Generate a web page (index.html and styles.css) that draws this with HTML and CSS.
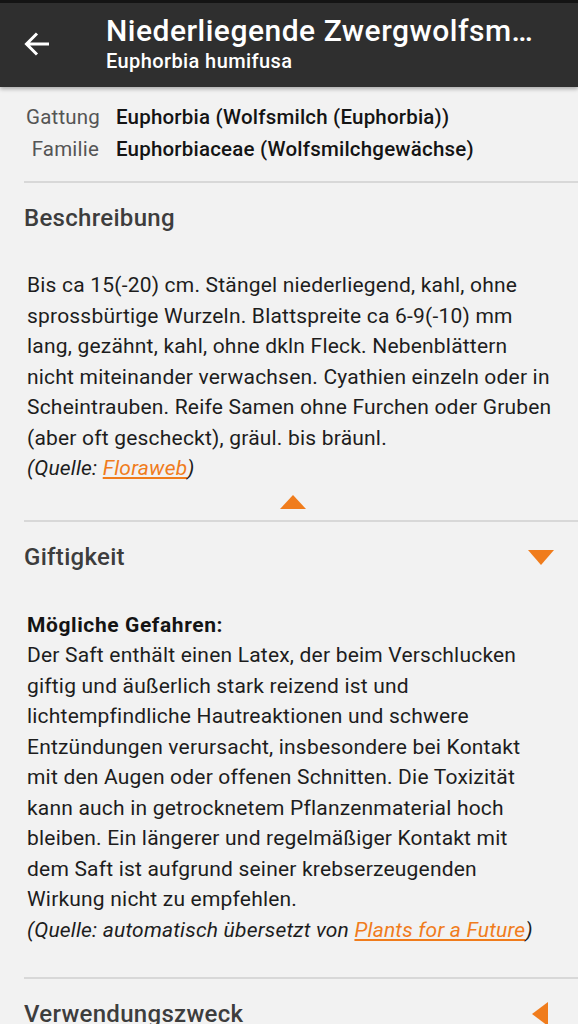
FILE: index.html
```html
<!DOCTYPE html>
<html lang="de">
<head>
    <meta charset="UTF-8">
    <meta name="viewport" content="width=device-width, initial-scale=1.0">
    <title>Niederliegende Zwergwolfsmilch</title>
    <link rel="stylesheet" href="styles.css">
</head>
<body>
    <div id="toolbar">
        <button class="backButton" aria-label="Zurück">
            <svg width="26" height="26" viewBox="0 0 26 26">
                <path d="M25 13H3M13 2.5L2.5 13L13 23.5" fill="none" stroke="#fff" stroke-width="3"/>
            </svg>
        </button>
        <div class="titles">
            <h1 class="title">Niederliegende Zwergwolfsmilch</h1>
            <div class="subtitle">Euphorbia humifusa</div>
        </div>
    </div>

    <div class="taxonomy">
        <div class="taxLabel">Gattung</div>
        <div class="taxValue">Euphorbia (Wolfsmilch (Euphorbia))</div>
        <div class="taxLabel">Familie</div>
        <div class="taxValue">Euphorbiaceae (Wolfsmilchgewächse)</div>
    </div>

    <div class="section">
        <div class="sectionHeader">
            <h2>Beschreibung</h2>
        </div>
        <div class="sectionBody">
            <p>Bis ca 15(-20) cm. Stängel niederliegend, kahl, ohne sprossbürtige Wurzeln. Blattspreite ca 6-9(-10) mm lang, gezähnt, kahl, ohne dkln Fleck. Nebenblättern nicht miteinander verwachsen. Cyathien einzeln oder in Scheintrauben. Reife Samen ohne Furchen oder Gruben (aber oft gescheckt), gräul. bis bräunl.</p>
            <p class="source">(Quelle: <a href="#">Floraweb</a>)</p>
        </div>
        <div class="collapse"><span class="arrowUp"></span></div>
    </div>

    <div class="section">
        <div class="sectionHeader">
            <h2>Giftigkeit</h2>
            <span class="arrowDown"></span>
        </div>
        <div class="sectionBody gap">
            <h3>Mögliche Gefahren:</h3>
            <p>Der Saft enthält einen Latex, der beim Verschlucken giftig und äußerlich stark reizend ist und lichtempfindliche Hautreaktionen und schwere Entzündungen verursacht, insbesondere bei Kontakt mit den Augen oder offenen Schnitten. Die Toxizität kann auch in getrocknetem Pflanzenmaterial hoch bleiben. Ein längerer und regelmäßiger Kontakt mit dem Saft ist aufgrund seiner krebserzeugenden Wirkung nicht zu empfehlen.</p>
            <p class="source">(Quelle: automatisch übersetzt von <a href="#">Plants for a Future</a>)</p>
        </div>
    </div>

    <div class="section">
        <div class="sectionHeader">
            <h2>Verwendungszweck</h2>
            <span class="arrowLeft"></span>
        </div>
    </div>
</body>
</html>
```

FILE: styles.css
```css
* {
    font-family: Roboto, "Noto Sans", sans-serif;
    box-sizing: border-box;
}

body {
    margin: 0;
    background-color: #f2f2f2;
    color: #1d1d1d;
    height: 1024px;
    overflow: hidden;
}

#toolbar {
    height: 87px;
    border-top: 3px solid #141414;
    background-color: #2f2f2f;
    color: white;
    display: flex;
    align-items: center;
    box-shadow: 0 2px 4px rgba(0, 0, 0, 0.3);
    position: relative;
}

.backButton {
    width: 50px;
    height: 50px;
    margin-left: 12px;
    margin-top: -3px;
    padding: 0;
    border: none;
    background: none;
    display: flex;
    align-items: center;
    justify-content: center;
}

.titles {
    margin-left: 44px;
    min-width: 0;
    flex: 1;
    padding-right: 38px;
    margin-top: -4px;
}

.title {
    margin: 0;
    font-size: 30px;
    font-weight: 500;
    line-height: 34px;
    letter-spacing: 0.5px;
    white-space: nowrap;
    overflow: hidden;
    text-overflow: ellipsis;
}

.subtitle {
    margin-top: 2px;
    font-size: 20px;
    font-weight: 500;
    line-height: 22px;
    letter-spacing: 0.4px;
}

.taxonomy {
    display: grid;
    grid-template-columns: 73px auto;
    column-gap: 17px;
    row-gap: 9px;
    padding: 19px 0 20px 26px;
    font-size: 20.5px;
    line-height: 23px;
    letter-spacing: 0.2px;
}

.taxLabel {
    text-align: right;
    color: #555;
}

.taxValue {
    font-weight: 500;
    color: #141414;
}

.section {
    margin-left: 24px;
    border-top: 2px solid #d8d8d8;
}

.sectionHeader {
    display: flex;
    align-items: center;
    justify-content: space-between;
    height: 70px;
    padding-right: 24px;
}

h2 {
    margin: 0;
    font-size: 24px;
    font-weight: 500;
    letter-spacing: 0.3px;
    color: #3d3d3d;
}

.sectionBody {
    padding: 17px 26px 0 3px;
    font-size: 21px;
    line-height: 30.5px;
    letter-spacing: 0.2px;
}

.sectionBody.gap {
    padding-top: 18px;
    padding-bottom: 32px;
}

.sectionBody p {
    margin: 0;
}

h3 {
    margin: 0;
    font-size: 21px;
    font-weight: 700;
    line-height: 30.5px;
    letter-spacing: 0.6px;
    color: #141414;
}

.source {
    font-style: italic;
}

.source a {
    color: #f07c1c;
}

.collapse {
    display: flex;
    justify-content: center;
    padding: 11px 0 11px 0;
    margin-left: -16px;
}

.arrowUp {
    width: 0;
    height: 0;
    border-left: 13px solid transparent;
    border-right: 13px solid transparent;
    border-bottom: 14px solid #f07c1c;
}

.arrowDown {
    width: 0;
    height: 0;
    border-left: 13px solid transparent;
    border-right: 13px solid transparent;
    border-top: 15px solid #f07c1c;
    margin-top: 2px;
}

.arrowLeft {
    width: 0;
    height: 0;
    border-top: 12px solid transparent;
    border-bottom: 12px solid transparent;
    border-right: 16px solid #f07c1c;
    margin-right: 6px;
}
```
